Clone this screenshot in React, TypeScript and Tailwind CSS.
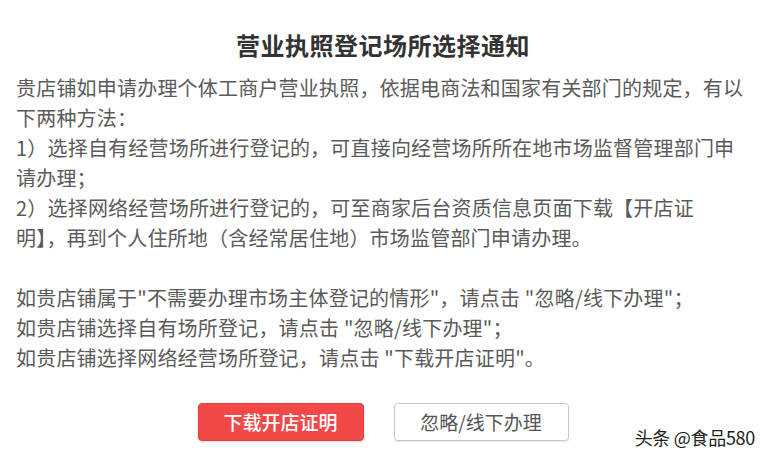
import React from "react";

const lines: string[] = [
  "贵店铺如申请办理个体工商户营业执照，依据电商法和国家有关部门的规定，有以",
  "下两种方法：",
  "1）选择自有经营场所进行登记的，可直接向经营场所所在地市场监督管理部门申",
  "请办理；",
  "2）选择网络经营场所进行登记的，可至商家后台资质信息页面下载【开店证",
  "明】，再到个人住所地（含经常居住地）市场监管部门申请办理。",
  "",
  "如贵店铺属于\"不需要办理市场主体登记的情形\"，请点击 \"忽略/线下办理\"；",
  "如贵店铺选择自有场所登记，请点击 \"忽略/线下办理\"；",
  "如贵店铺选择网络经营场所登记，请点击 \"下载开店证明\"。",
];

export default function App() {
  return (
    <div
      className="relative w-[766px] h-[466px] bg-white overflow-hidden"
      style={{ fontFamily: '"Noto Sans CJK SC", "Noto Sans", sans-serif' }}
    >
      <div className="flex flex-col pt-[29px]">
        <div className="text-center text-[24px] leading-[32px] font-bold text-[#333333] tracking-[0.5px]">
          营业执照登记场所选择通知
        </div>
        <div className="mt-[12px] pl-[16px] text-[20px] leading-[30px] text-[#5a5a5a] tracking-[0.2px]">
          {lines.map((l, i) => (
            <div key={i} className="whitespace-nowrap h-[30px]">
              {l}
            </div>
          ))}
        </div>
        <div className="mt-[30px] flex justify-center gap-[30px]">
          <button className="w-[166px] h-[38px] rounded-[4px] bg-[#f24848] border border-[#e23c3c] text-white text-[19px] font-medium shadow-[0_1px_3px_rgba(0,0,0,0.15)]">
            下载开店证明
          </button>
          <button className="w-[175px] h-[38px] rounded-[4px] bg-white border border-[#c8c8c8] text-[#555555] text-[19px] shadow-[0_1px_2px_rgba(0,0,0,0.1)]">
            忽略/线下办理
          </button>
        </div>
      </div>
      <div className="absolute right-[11px] top-[425px] text-[18px] leading-[24px] text-[#222222] whitespace-nowrap tracking-[-0.3px] [text-shadow:0_0_2px_#ffffff]">
        头条 @食品580
      </div>
    </div>
  );
}
